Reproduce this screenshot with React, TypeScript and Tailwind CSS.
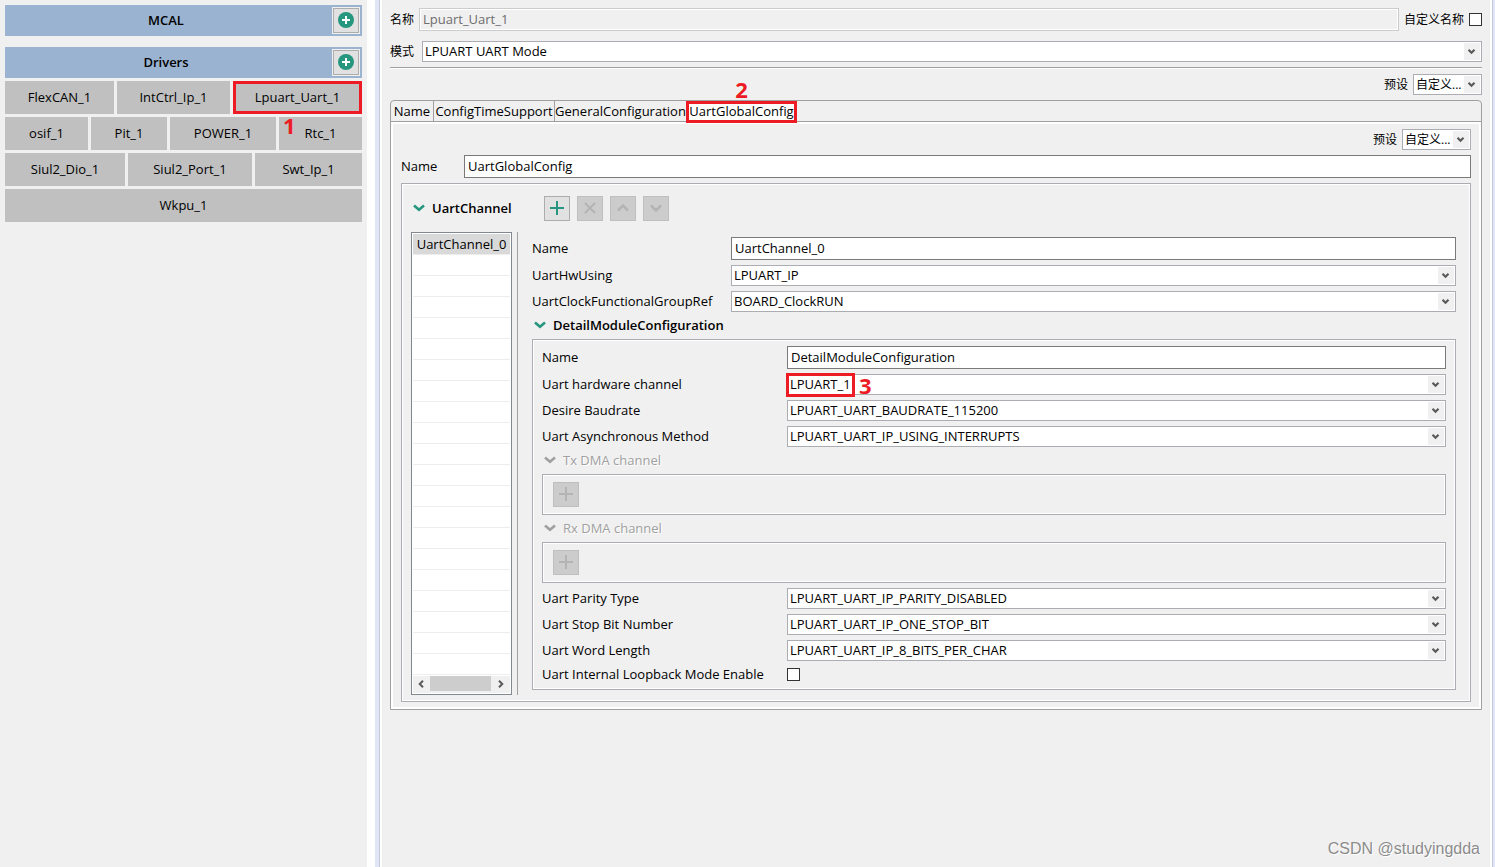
import { useId, type ReactNode } from 'react';

const driverRows = [
  {
    cols: 'grid-cols-[109fr_113fr_129fr]',
    items: ['FlexCAN_1', 'IntCtrl_Ip_1', 'Lpuart_Uart_1'],
  },
  {
    cols: 'grid-cols-[83fr_76fr_106fr_83fr]',
    items: ['osif_1', 'Pit_1', 'POWER_1', 'Rtc_1'],
  },
  {
    cols: 'grid-cols-[120fr_124fr_107fr]',
    items: ['Siul2_Dio_1', 'Siul2_Port_1', 'Swt_Ip_1'],
  },
  { cols: 'grid-cols-1', items: ['Wkpu_1'] },
];

const tabs = [
  { name: 'Name', width: 'w-[43px]' },
  { name: 'ConfigTimeSupport', width: 'w-[121px]' },
  { name: 'GeneralConfiguration', width: 'w-[132px]' },
  { name: 'UartGlobalConfig', width: 'w-[111px]' },
];

function AddCircle() {
  return (
    <svg width="18" height="18" viewBox="0 0 18 18" aria-hidden="true">
      <circle cx="9" cy="9" r="8" fill="#26967f" />
      <path d="M9 5v8M5 9h8" stroke="#fff" strokeWidth="2" />
    </svg>
  );
}

function Twisty({ disabled = false }: { disabled?: boolean }) {
  return (
    <svg width="12" height="8" viewBox="0 0 12 8" fill="none" aria-hidden="true">
      <path d="M1 1.500l5 4.300 5-4.300" stroke={disabled ? '#a0a0a0' : '#26967f'} strokeWidth="2.6" />
    </svg>
  );
}

function SectionBar({ title }: { title: string }) {
  return (
    <div className="flex h-[31px] items-center bg-[#9ab3d1] pr-0.5">
      <h2 className="flex-1 pr-[5px] pb-0.5 text-center font-semibold">{title}</h2>
      <button
        type="button"
        aria-label={`Add ${title}`}
        className="flex h-[27px] w-7 items-center justify-center border border-[#f0f0f0] bg-[#e1e1e1] pb-px inset-ring inset-ring-[#adadad]"
      >
        <AddCircle />
      </button>
    </div>
  );
}

function Select({ id, value }: { id: string; value: string }) {
  return (
    <div className="relative w-full">
      <select
        id={id}
        className="block h-[21px] w-full appearance-none border border-[#abadb3] bg-white pr-4 pl-0.5 leading-[19px]"
      >
        <option>{value}</option>
      </select>
      <span className="pointer-events-none absolute inset-y-0.5 right-0.5 flex w-4 items-center justify-center bg-[#f0f0f0]">
        <svg width="8" height="6" viewBox="0 0 8 6" fill="none" aria-hidden="true">
          <path d="M0.500 0.800l3 3 3-3" stroke="#5a5a5a" strokeWidth="2.2" />
        </svg>
      </span>
    </div>
  );
}

function TextInput({ id, value }: { id: string; value: string }) {
  return (
    <input
      id={id}
      defaultValue={value}
      className="h-[23px] w-full border border-[#7a7a7a] bg-white px-[3px] pb-0.5"
    />
  );
}

function Row({
  label,
  cols,
  value,
  kind = 'select',
  children,
}: {
  label: string;
  cols: string;
  value: string;
  kind?: 'select' | 'text';
  children?: ReactNode;
}) {
  const id = useId();
  return (
    <div className={`relative grid items-center ${cols}`}>
      <label htmlFor={id} className="pb-0.5">
        {label}
      </label>
      {kind === 'text' ? <TextInput id={id} value={value} /> : <Select id={id} value={value} />}
      {children}
    </div>
  );
}

function Preset() {
  const id = useId();
  return (
    <div className="flex items-center justify-end gap-[5px]">
      <label htmlFor={id} className="text-xs">
        预设
      </label>
      <div className="w-[69px] text-xs">
        <Select id={id} value="自定义..." />
      </div>
    </div>
  );
}

function ToolButton({
  label,
  disabled = false,
  children,
}: {
  label: string;
  disabled?: boolean;
  children: ReactNode;
}) {
  return (
    <button
      type="button"
      aria-label={label}
      disabled={disabled}
      className="flex h-[25px] w-[26px] items-center justify-center border border-[#adadad] bg-[#e1e1e1] pb-px text-[#26967f] disabled:border-[#bfbfbf] disabled:bg-[#cccccc] disabled:text-[#b4b4b4]"
    >
      <svg width="14" height="14" viewBox="0 0 14 14" fill="none" stroke="currentColor" strokeWidth="2">
        {children}
      </svg>
    </button>
  );
}

function DmaGroup({ title }: { title: string }) {
  return (
    <section>
      <h4 className="flex h-[27px] items-center gap-[7px] pb-0.5 pl-0.5 text-[#a0a0a0] [text-shadow:1px_1px_0_#fff]">
        <Twisty disabled />
        {title}
      </h4>
      <div className="border border-[#abadb3] px-2.5 py-[7px] inset-ring inset-ring-white">
        <ToolButton label={`Add ${title}`} disabled>
          <path d="M7 0v14M0 7h14" />
        </ToolButton>
      </div>
    </section>
  );
}

function ChannelList() {
  return (
    <div className="flex w-[101px] shrink-0 flex-col border border-[#828790] bg-white p-px">
      <ul className="flex-1 bg-[repeating-linear-gradient(to_bottom,#fff_0_20px,#ededed_20px_21px)]">
        <li className="h-5 bg-[#d9d9d9] text-center leading-5">UartChannel_0</li>
      </ul>
      <div className="flex h-[17px] bg-[#f0f0f0]">
        <button type="button" aria-label="Scroll left" className="flex w-[17px] items-center justify-center pb-0.5">
          <svg width="7" height="8" viewBox="0 0 7 8" fill="none" aria-hidden="true">
            <path d="M5 0.700L1.700 4 5 7.300" stroke="#5a5a5a" strokeWidth="2" />
          </svg>
        </button>
        <div className="h-[15px] w-[61px] bg-[#cdcdcd]" />
        <button type="button" aria-label="Scroll right" className="flex flex-1 items-center justify-center pb-0.5">
          <svg width="7" height="8" viewBox="0 0 7 8" fill="none" aria-hidden="true">
            <path d="M2 0.700L5.300 4 2 7.300" stroke="#5a5a5a" strokeWidth="2" />
          </svg>
        </button>
      </div>
    </div>
  );
}

function Sidebar() {
  return (
    <aside className="w-[367px] shrink-0 bg-[#f0f0f0] p-[5px]">
      <SectionBar title="MCAL" />
      <div className="mt-[11px] flex flex-col gap-[3px]">
        <SectionBar title="Drivers" />
        {driverRows.map((row) => (
          <div key={row.cols} className={`grid gap-[3px] ${row.cols}`}>
            {row.items.map((item) => (
              <button
                key={item}
                type="button"
                className={`relative h-[33px] bg-[#c0c0c0] pb-0.5 ${
                  item === 'Lpuart_Uart_1' ? 'outline-3 -outline-offset-3 outline-[#ed1c24]' : ''
                }`}
              >
                {item}
                {item === 'Rtc_1' && (
                  <span className="absolute -top-1 left-1 text-[22px] leading-6 font-bold text-[#ed1c24]">
                    1
                  </span>
                )}
              </button>
            ))}
          </div>
        ))}
      </div>
    </aside>
  );
}

function DetailModule() {
  const cols = 'grid-cols-[245px_1fr]';
  return (
    <div className="border border-[#abadb3] px-[9px] pt-1.5 pb-[7px] inset-ring inset-ring-white">
      <div className="flex flex-col gap-[5px]">
        <Row label="Name" cols={cols} value="DetailModuleConfiguration" kind="text" />
        <Row label="Uart hardware channel" cols={cols} value="LPUART_1">
          <span className="pointer-events-none absolute -top-px left-[244px] h-6 w-[69px] border-3 border-[#ed1c24]" />
          <span className="pointer-events-none absolute -top-px left-[317px] text-[22px] leading-6 font-bold text-[#ed1c24]">
            3
          </span>
        </Row>
        <Row label="Desire Baudrate" cols={cols} value="LPUART_UART_BAUDRATE_115200" />
        <Row label="Uart Asynchronous Method" cols={cols} value="LPUART_UART_IP_USING_INTERRUPTS" />
      </div>
      <DmaGroup title="Tx DMA channel" />
      <DmaGroup title="Rx DMA channel" />
      <div className="mt-[5px] flex flex-col gap-[5px]">
        <Row label="Uart Parity Type" cols={cols} value="LPUART_UART_IP_PARITY_DISABLED" />
        <Row label="Uart Stop Bit Number" cols={cols} value="LPUART_UART_IP_ONE_STOP_BIT" />
        <Row label="Uart Word Length" cols={cols} value="LPUART_UART_IP_8_BITS_PER_CHAR" />
        <div className="grid grid-cols-[245px_1fr] items-center leading-4">
          <label htmlFor="loopback">Uart Internal Loopback Mode Enable</label>
          <input
            id="loopback"
            type="checkbox"
            className="size-[13px] appearance-none border border-[#333] bg-white"
          />
        </div>
      </div>
    </div>
  );
}

function GlobalConfig() {
  const cols = 'grid-cols-[199px_1fr]';
  return (
    <div className="px-2 py-[5px]">
      <Preset />
      <div className="mt-[5px]">
        <Row label="Name" cols="grid-cols-[63px_1fr]" value="UartGlobalConfig" kind="text" />
      </div>
      <section className="mt-[5px] border border-[#abadb3] px-[9px] pt-3 pb-1.5 inset-ring inset-ring-white">
        <div className="flex items-center">
          <h3 className="flex w-[133px] items-center gap-[7px] pb-0.5 pl-0.5 font-semibold">
            <Twisty />
            UartChannel
          </h3>
          <div className="flex gap-[7px]">
            <ToolButton label="Add channel">
              <path d="M7 0v14M0 7h14" />
            </ToolButton>
            <ToolButton label="Remove channel" disabled>
              <path d="M2 2l10 10M12 2L2 12" />
            </ToolButton>
            <ToolButton label="Move up" disabled>
              <path d="M2 9.500l5-5 5 5" strokeWidth="2.6" />
            </ToolButton>
            <ToolButton label="Move down" disabled>
              <path d="M2 4.500l5 5 5-5" strokeWidth="2.6" />
            </ToolButton>
          </div>
        </div>
        <div className="mt-[11px] flex">
          <ChannelList />
          <div className="ml-[5px] w-px bg-[#a0a0a0]" />
          <div className="ml-3.5 flex-1 pt-[5px] pr-[5px] pb-[5px]">
            <div className="flex flex-col gap-[5px]">
              <Row label="Name" cols={cols} value="UartChannel_0" kind="text" />
              <Row label="UartHwUsing" cols={cols} value="LPUART_IP" />
              <Row label="UartClockFunctionalGroupRef" cols={cols} value="BOARD_ClockRUN" />
            </div>
            <h3 className="flex h-[27px] items-center gap-[7px] pb-0.5 pl-0.5 font-semibold">
              <Twisty />
              DetailModuleConfiguration
            </h3>
            <DetailModule />
          </div>
        </div>
      </section>
    </div>
  );
}

export default function App() {
  return (
    <div className="flex min-h-screen bg-white font-['Open_Sans','Noto_Sans_CJK_SC',sans-serif] text-[13px] leading-[18px] text-black">
      <Sidebar />
      <div className="ml-2 w-[5px] shrink-0 border-r border-[#c3c9dc] bg-[#e1e6f6]" />
      <main className="relative ml-0.5 flex-1 bg-[#f0f0f0] px-2 pt-2">
        <div className="flex items-center gap-[5px]">
          <label htmlFor="component-name" className="text-xs">
            名称
          </label>
          <input
            id="component-name"
            disabled
            defaultValue="Lpuart_Uart_1"
            className="h-[23px] min-w-0 flex-1 border border-[#cccccc] bg-[#f0f0f0] px-[3px] pb-0.5 text-[#6d6d6d] inset-ring inset-ring-white"
          />
          <label htmlFor="custom-name" className="text-xs">
            自定义名称
          </label>
          <input
            id="custom-name"
            type="checkbox"
            className="size-[13px] appearance-none border border-[#333] bg-white"
          />
        </div>
        <div className="mt-2.5 flex items-center gap-2">
          <label htmlFor="mode" className="shrink-0 text-xs">
            模式
          </label>
          <Select id="mode" value="LPUART UART Mode" />
        </div>
        <div className="my-[5px] h-0.5 border-t border-[#a0a0a0] bg-white" />
        <Preset />
        <div className="mt-[5px] rounded-t border border-[#a0a0a0]">
          <div role="tablist" className="flex h-[21px] border-b border-[#a0a0a0]">
            {tabs.map((tab, i) => (
              <button
                key={tab.name}
                type="button"
                role="tab"
                aria-selected={i === 3}
                className={`relative flex justify-center border-r border-[#a0a0a0] leading-5 whitespace-nowrap aria-selected:-mb-0.5 aria-selected:-ml-px aria-selected:border-3 aria-selected:border-[#ed1c24] aria-selected:bg-white aria-selected:leading-[15px] ${tab.width}`}
              >
                {tab.name}
                {i === 3 && (
                  <span className="absolute inset-x-0 -top-[27px] text-[22px] leading-6 font-bold text-[#ed1c24]">
                    2
                  </span>
                )}
              </button>
            ))}
          </div>
          <div role="tabpanel" className="border-2 border-white">
            <GlobalConfig />
          </div>
        </div>
        <p className="absolute right-2.5 bottom-2 font-['Liberation_Sans',sans-serif] text-base leading-5 text-[#8c8c8c] [text-shadow:1px_1px_0_#fff]">
          CSDN @studyingdda
        </p>
      </main>
      <div className="ml-0.5 w-[3px] shrink-0 border-l border-[#c3c9dc] bg-[#e1e6f6]" />
    </div>
  );
}
